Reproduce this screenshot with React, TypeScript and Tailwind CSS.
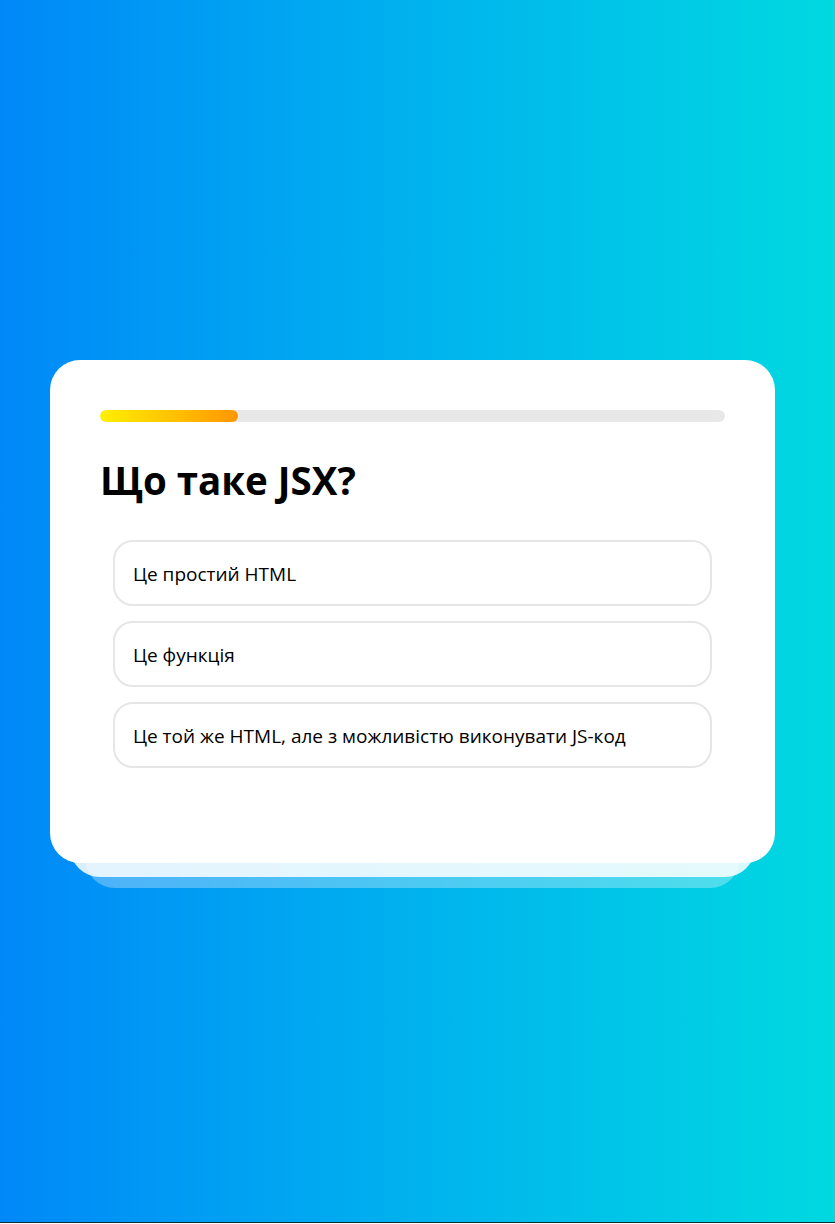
import React, { useState } from 'react';

interface Question {
  title: string;
  variants: string[];
}

const question: Question = {
  title: 'Що таке JSX?',
  variants: [
    'Це простий HTML',
    'Це функція',
    'Це той же HTML, але з можливістю виконувати JS-код',
  ],
};

const App: React.FC = () => {
  const [step] = useState<number>(0);
  const total = 4.56;
  const percent = Math.round(((step + 1) / total) * 100) / 100;

  return (
    <div
      className="h-[1223px] w-full flex items-center pl-[50px] bg-linear-to-r from-[#0088f8] to-[#00d9e0] border-b border-[#0b2a33]"
      style={{ fontFamily: '"Open Sans", "Noto Sans", sans-serif' }}
    >
      <div className="relative w-[725px]">
        {/* stacked layers behind the card */}
        <div className="absolute left-[35px] right-[35px] bottom-[-25px] h-[100px] rounded-[30px] bg-white/30" />
        <div className="absolute left-[20px] right-[20px] bottom-[-14px] h-[100px] rounded-[30px] bg-white/85" />

        <div className="relative bg-white rounded-[30px] px-[50px] pt-[50px] pb-[95px]">
          <div className="h-[12px] w-full rounded-full bg-[#e8e8e8] overflow-hidden">
            <div
              className="h-full rounded-full bg-linear-to-r from-[#fff000] to-[#ff9600]"
              style={{ width: `${percent * 100}%` }}
            />
          </div>

          <h1 className="mt-[35px] text-[38.5px] leading-[46px] font-bold text-black">{question.title}</h1>

          <ul className="mt-[37px] mx-[13px] flex flex-col gap-[15px]">
            {question.variants.map((text, index) => (
              <li
                key={index}
                className="h-[66px] flex items-center pl-[18px] pt-[3px] border-2 border-[#e6e6e6] rounded-[20px] text-[19px] text-black cursor-pointer"
              >
                {text}
              </li>
            ))}
          </ul>
        </div>
      </div>
    </div>
  );
};

export default App;
